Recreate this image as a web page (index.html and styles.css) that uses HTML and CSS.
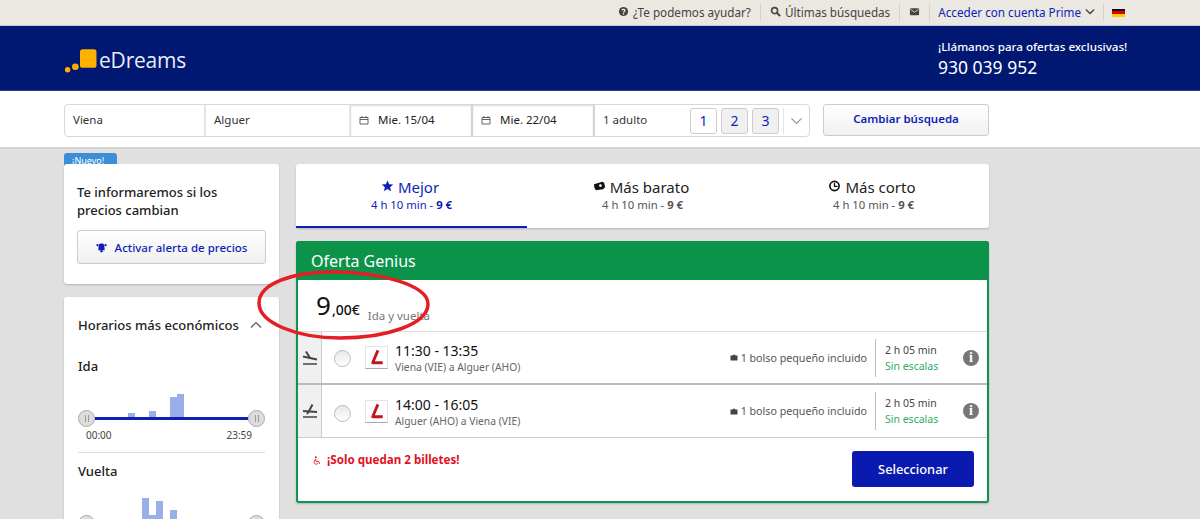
FILE: index.html
```html
<!DOCTYPE html>
<html lang="es">
<head>
    <meta charset="UTF-8">
    <title>eDreams</title>
    <link rel="stylesheet" href="styles.css">
</head>
<body>
    <div class="topbar">
        <div class="top-item">
            <svg class="top-icon" viewBox="0 0 12 12"><circle cx="6" cy="6" r="5" fill="#444"/><path d="M4.4 4.6C4.6 3.2 7.6 3.2 7.6 4.8 7.6 6 6 5.8 6 7.2" fill="none" stroke="#fff" stroke-width="1.3"/><rect x="5.3" y="8" width="1.4" height="1.4" fill="#fff"/></svg>
            ¿Te podemos ayudar?
        </div>
        <div class="top-item">
            <svg class="top-icon" viewBox="0 0 12 12"><circle cx="5" cy="5" r="3.3" fill="none" stroke="#444" stroke-width="1.8"/><path d="M7.5 7.5L11 11" stroke="#444" stroke-width="2.2"/></svg>
            Últimas búsquedas
        </div>
        <div class="top-item">
            <svg class="top-icon" viewBox="0 0 12 12"><rect x="1" y="2.5" width="10" height="7.5" rx="1" fill="#444"/><path d="M1.5 3.5L6 6.8 10.5 3.5" fill="none" stroke="#ebe8e2" stroke-width=".9"/></svg>
        </div>
        <div class="top-item top-prime">
            Acceder con cuenta Prime
            <svg class="top-chevron" viewBox="0 0 12 8"><path d="M1 1.5L6 6.5 11 1.5" fill="none" stroke="#444" stroke-width="1.6"/></svg>
        </div>
        <div class="top-item top-flag">
            <span class="flag"><i class="flag-black"></i><i class="flag-red"></i><i class="flag-gold"></i></span>
        </div>
    </div>

    <header class="header">
        <div class="logo">
            <svg class="logo-mark" viewBox="0 0 32 26"><circle cx="3.5" cy="22" r="2.6" fill="#ffb000"/><circle cx="11" cy="19" r="3.2" fill="#ffb000"/><rect x="15.5" y="2" width="16" height="18" rx="2.5" fill="#ffb000"/></svg>
            <span class="logo-text">eDreams</span>
        </div>
        <div class="phone">
            <div class="phone-label">¡Llámanos para ofertas exclusivas!</div>
            <div class="phone-number">930 039 952</div>
        </div>
    </header>

    <div class="search-strip">
        <div class="search-box">
            <div class="field field-city">Viena</div>
            <div class="field field-city">Alguer</div>
            <div class="field field-date">
                <svg class="cal-icon" viewBox="0 0 10 10"><path d="M1 2.5H9V9H1ZM1 4.5H9M3 1V3M7 1V3" fill="none" stroke="#555" stroke-width=".9"/></svg>
                Mie. 15/04
            </div>
            <div class="field field-date">
                <svg class="cal-icon" viewBox="0 0 10 10"><path d="M1 2.5H9V9H1ZM1 4.5H9M3 1V3M7 1V3" fill="none" stroke="#555" stroke-width=".9"/></svg>
                Mie. 22/04
            </div>
            <div class="field field-pax">
                <span class="pax-label">1 adulto</span>
                <span class="pax-btn pax-active">1</span>
                <span class="pax-btn">2</span>
                <span class="pax-btn">3</span>
                <span class="pax-more">
                    <svg viewBox="0 0 12 8"><path d="M1 1.5L6 6.5 11 1.5" fill="none" stroke="#999" stroke-width="1.1"/></svg>
                </span>
            </div>
        </div>
        <div class="search-btn">Cambiar búsqueda</div>
    </div>

    <div class="content">
        <aside class="sidebar">
            <div class="alert-wrap">
                <div class="new-tag">¡Nuevo!</div>
                <div class="card alert-card">
                    <div class="alert-title">Te informaremos si los precios cambian</div>
                    <div class="alert-btn">
                        <svg class="bell" viewBox="0 0 12 12"><path d="M3 3.5C3 2 4.5 1.5 6 1.5S9 2 9 3.5L9.5 9H2.5Z" fill="#0d1fb5"/><circle cx="1.6" cy="3.5" r="1.2" fill="#0d1fb5"/><circle cx="10.4" cy="3.5" r="1.2" fill="#0d1fb5"/><circle cx="6" cy="10" r="1.3" fill="#0d1fb5"/></svg>
                        Activar alerta de precios
                    </div>
                </div>
            </div>
            <div class="card hours-card">
                <div class="hours-head">
                    Horarios más económicos
                    <svg class="hours-chevron" viewBox="0 0 12 8"><path d="M1 6.5L6 1.5 11 6.5" fill="none" stroke="#555" stroke-width="1.2"/></svg>
                </div>
                <div class="hours-label">Ida</div>
                <div class="hist">
                    <i class="bar" style="margin-left:50px;height:5px"></i>
                    <i class="bar" style="margin-left:14px;height:7px"></i>
                    <i class="bar" style="margin-left:14px;height:21px"></i>
                    <i class="bar" style="height:24px"></i>
                </div>
                <div class="slider">
                    <span class="handle"><i></i></span>
                    <span class="track"></span>
                    <span class="handle"><i></i></span>
                </div>
                <div class="slider-times"><span>00:00</span><span>23:59</span></div>
                <div class="hours-sep"></div>
                <div class="hours-label">Vuelta</div>
                <div class="hist">
                    <i class="bar" style="margin-left:64px;height:25px"></i>
                    <i class="bar" style="height:8px"></i>
                    <i class="bar" style="height:22px"></i>
                    <i class="bar" style="margin-left:7px;height:13px"></i>
                </div>
                <div class="slider">
                    <span class="handle"><i></i></span>
                    <span class="track"></span>
                    <span class="handle"><i></i></span>
                </div>
            </div>
        </aside>

        <main class="results">
            <div class="card tabs">
                <div class="tab tab-active">
                    <div class="tab-title">
                        <svg class="tab-icon" viewBox="0 0 12 12"><path d="M6 .5L7.6 4.3 11.7 4.6 8.6 7.3 9.6 11.3 6 9.1 2.4 11.3 3.4 7.3 .3 4.6 4.4 4.3Z" fill="#0d1fb5"/></svg>
                        Mejor
                    </div>
                    <div class="tab-sub">4 h 10 min - <b>9 €</b></div>
                </div>
                <div class="tab">
                    <div class="tab-title">
                        <svg class="tab-icon" viewBox="0 0 14 12"><path d="M1 4L10 1.5 12 2.5 13 7 11 9.5 3 10.5 1.5 8Z" fill="#111"/><circle cx="8" cy="5.5" r="1.5" fill="#fff"/></svg>
                        Más barato
                    </div>
                    <div class="tab-sub">4 h 10 min - <b>9 €</b></div>
                </div>
                <div class="tab">
                    <div class="tab-title">
                        <svg class="tab-icon" viewBox="0 0 12 12"><circle cx="6" cy="6" r="4.6" fill="none" stroke="#111" stroke-width="1.7"/><path d="M6 3V6.3H9" fill="none" stroke="#111" stroke-width="1.3"/></svg>
                        Más corto
                    </div>
                    <div class="tab-sub">4 h 10 min - <b>9 €</b></div>
                </div>
            </div>

            <div class="offer">
                <div class="offer-head">Oferta Genius</div>
                <div class="offer-price">
                    <span class="price-int">9</span><span class="price-dec">,00€</span>
                    <span class="price-note">Ida y vuelta</span>
                </div>

                <div class="leg leg-first">
                    <div class="leg-side">
                        <svg viewBox="0 0 16 14"><path d="M1 5.5L15 8.5" stroke="#444" stroke-width="2.2"/><path d="M4 .5L8 7" stroke="#444" stroke-width="2"/><path d="M1 13H15" stroke="#444" stroke-width="1.5"/></svg>
                    </div>
                    <span class="radio"></span>
                    <span class="airline"><svg viewBox="0 0 22 22"><path d="M12.5 3.5L7 16.5H17.5" fill="none" stroke="#c3161c" stroke-width="3" stroke-linejoin="round"/></svg></span>
                    <div class="leg-times">
                        <div class="leg-hours">11:30 - 13:35</div>
                        <div class="leg-route">Viena (VIE) a Alguer (AHO)</div>
                    </div>
                    <div class="leg-bag">
                        <svg class="bag-icon" viewBox="0 0 10 9"><path d="M3.5 2V1H6.5V2H9.5V8.5H.5V2Z" fill="#444"/></svg>
                        1 bolso pequeño incluido
                    </div>
                    <div class="leg-info">
                        <div class="leg-duration">2 h 05 min</div>
                        <div class="leg-stops">Sin escalas</div>
                    </div>
                    <span class="info-icon">i</span>
                </div>

                <div class="leg">
                    <div class="leg-side">
                        <svg viewBox="0 0 16 14"><path d="M1 7L15 8" stroke="#444" stroke-width="2"/><path d="M10.5 .5L7 7 5 10" fill="none" stroke="#444" stroke-width="2"/><path d="M1 13H15" stroke="#444" stroke-width="1.5"/></svg>
                    </div>
                    <span class="radio"></span>
                    <span class="airline"><svg viewBox="0 0 22 22"><path d="M12.5 3.5L7 16.5H17.5" fill="none" stroke="#c3161c" stroke-width="3" stroke-linejoin="round"/></svg></span>
                    <div class="leg-times">
                        <div class="leg-hours">14:00 - 16:05</div>
                        <div class="leg-route">Alguer (AHO) a Viena (VIE)</div>
                    </div>
                    <div class="leg-bag">
                        <svg class="bag-icon" viewBox="0 0 10 9"><path d="M3.5 2V1H6.5V2H9.5V8.5H.5V2Z" fill="#444"/></svg>
                        1 bolso pequeño incluido
                    </div>
                    <div class="leg-info">
                        <div class="leg-duration">2 h 05 min</div>
                        <div class="leg-stops">Sin escalas</div>
                    </div>
                    <span class="info-icon">i</span>
                </div>

                <div class="offer-foot">
                    <div class="seats">
                        <svg class="seat-icon" viewBox="0 0 10 12"><circle cx="3.5" cy="1.5" r="1.3" fill="#e3101f"/><path d="M3.5 3.5V7H7L8.5 10.5M3 5A3 3 0 1 0 6.5 9.5" fill="none" stroke="#e3101f" stroke-width="1.2"/></svg>
                        ¡Solo quedan 2 billetes!
                    </div>
                    <div class="select-btn">Seleccionar</div>
                </div>
            </div>
        </main>
    </div>

    <svg class="circle-mark" viewBox="0 0 180 74"><path d="M173 36C173 17 125 4 78 4 36 4 4 16 4 35 4 55 42 70 85 70 132 70 173 56 173 36Z" fill="none" stroke="#e41e26" stroke-width="3.5"/></svg>
</body>
</html>
```

FILE: styles.css
```css
* {
    box-sizing: border-box;
}
html, body {
    height: 100%;
    overflow: hidden;
}
body {
    margin: 0;
    position: relative;
    background: #e0e0e0;
    font-family: 'Noto Sans', sans-serif;
    color: #222;
}

/* top bar */
.topbar {
    height: 26px;
    padding: 4px 67px 0 0;
    background: #ebe8e2;
    border-bottom: 1px solid #c2c6d8;
    display: flex;
    justify-content: flex-end;
    font-size: 11.7px;
    color: #444;
}
.top-item {
    height: 17px;
    padding: 0 9px 2px;
    border-left: 1px solid #d2d0ca;
    display: flex;
    align-items: center;
    gap: 4px;
}
.top-item:first-child {
    border-left: none;
}
.top-icon {
    width: 11px;
    height: 11px;
}
.top-prime {
    padding: 0 8px 2px;
    gap: 3px;
    color: #0d1fb5;
}
.top-flag {
    padding: 0 8px;
}
.top-chevron {
    width: 10px;
    height: 7px;
    margin-left: 1px;
}
.flag {
    width: 13px;
    height: 8px;
    display: flex;
    flex-direction: column;
}
.flag i {
    flex: 1;
}
.flag-black {
    background: #111;
}
.flag-red {
    background: #d00;
}
.flag-gold {
    background: #fc0;
}

/* header */
.header {
    height: 65px;
    padding: 0 62px 0 64px;
    background: #001871;
    border-bottom: 1px solid #2b3f93;
    display: flex;
    justify-content: space-between;
    align-items: flex-start;
    color: #fff;
}
.logo {
    margin-top: 21px;
    display: flex;
    align-items: flex-start;
    gap: 2px;
}
.logo-mark {
    width: 33px;
    height: 27px;
}
.logo-text {
    font-family: 'Open Sans', sans-serif;
    font-size: 21px;
    line-height: 26px;
    letter-spacing: -.2px;
    color: #e8ecf6;
}
.phone {
    width: 200px;
    padding-top: 12px;
}
.phone-label {
    font-size: 11.6px;
    line-height: 17px;
    font-weight: 500;
}
.phone-number {
    font-size: 17.5px;
    line-height: 24px;
}

/* search */
.search-strip {
    height: 58px;
    padding: 13px 0 0 64px;
    background: #fff;
    border-bottom: 2px solid #d4d4d4;
    display: flex;
    gap: 13px;
}
.search-box {
    width: 746px;
    height: 33px;
    border: 1px solid #d8d8d8;
    border-radius: 4px;
    display: flex;
    font-size: 11.5px;
    color: #333;
}
.field {
    padding: 0 0 2px 8px;
    border-right: 2px solid #e4e4e4;
    display: flex;
    align-items: center;
}
.field-city {
    width: 141px;
}
.field-city + .field-city {
    width: 145px;
}
.field-date {
    width: 122px;
    box-shadow: inset 0 1px 2px #ddd;
    border-right: 2px solid #d4d4d4;
    color: #222;
}
.field-pax {
    flex: 1;
    padding-bottom: 0;
    border-right: none;
}
.cal-icon {
    width: 10px;
    height: 10px;
    margin-right: 9px;
}
.pax-label {
    width: 87px;
    padding-bottom: 2px;
}
.pax-btn {
    width: 27px;
    height: 26px;
    margin-right: 4px;
    border: 1px solid #ccc;
    border-radius: 3px;
    background: #f0f0f0;
    color: #0d1fb5;
    font-size: 14px;
    display: flex;
    justify-content: center;
    align-items: center;
}
.pax-active {
    background: #fff;
}
.pax-more {
    width: 26px;
    height: 26px;
    border-left: 1px solid #e4e4e4;
    display: flex;
    justify-content: center;
    align-items: center;
}
.pax-more svg {
    width: 13px;
    height: 8px;
}
.search-btn {
    width: 166px;
    height: 32px;
    padding-bottom: 3px;
    border: 1px solid #ccc;
    border-radius: 3px;
    background: linear-gradient(#fff, #f0f0f0);
    color: #0d1fb5;
    font-size: 11.5px;
    font-weight: 600;
    display: flex;
    justify-content: center;
    align-items: center;
}

/* page */
.content {
    padding: 15px 0 0 64px;
    display: flex;
    gap: 17px;
    align-items: flex-start;
}
.card {
    background: #fff;
    border-radius: 3px;
    box-shadow: 0 1px 2px rgba(0, 0, 0, 0.2);
}
.sidebar {
    width: 215px;
}
.alert-wrap {
    margin-top: -11px;
}
.new-tag {
    width: 53px;
    height: 20px;
    margin-bottom: -9px;
    padding: 2px 0 0 8px;
    border-radius: 3px 3px 0 0;
    background: #3a8fd6;
    color: #fff;
    font-size: 9px;
    line-height: 12px;
}
.alert-card {
    position: relative;
    height: 120px;
    padding: 19px 13px 0;
}
.alert-title {
    max-width: 170px;
    font-size: 13px;
    line-height: 18px;
    font-weight: 500;
    color: #222;
}
.alert-btn {
    height: 34px;
    margin-top: 11px;
    border: 1px solid #ccc;
    border-radius: 3px;
    background: linear-gradient(#fff, #f0f0f0);
    color: #0d1fb5;
    font-size: 11.5px;
    font-weight: 500;
    display: flex;
    justify-content: center;
    align-items: center;
    gap: 8px;
}
.bell {
    width: 11px;
    height: 11px;
}
.hours-card {
    margin-top: 13px;
    height: 300px;
    padding: 19px 14px 0;
}
.hours-head {
    font-size: 13px;
    line-height: 18px;
    font-weight: 500;
    display: flex;
    justify-content: space-between;
    align-items: center;
    padding-right: 3px;
}
.hours-chevron {
    width: 12px;
    height: 8px;
}
.hours-label {
    margin-top: 23px;
    font-size: 13px;
    line-height: 18px;
    font-weight: 500;
}
.hist {
    height: 42px;
    margin-top: 1px;
    display: flex;
    align-items: flex-end;
}
.bar {
    width: 7px;
    display: block;
    background: #9aaeea;
}
.slider {
    margin-top: -8px;
    height: 16px;
    display: flex;
    align-items: center;
}
.handle {
    width: 17px;
    height: 17px;
    flex: none;
    border: 1px solid #aaa;
    border-radius: 50%;
    background: #ddd;
    display: flex;
    justify-content: center;
    align-items: center;
}
.handle i {
    width: 4px;
    height: 7px;
    border-left: 1px solid #999;
    border-right: 1px solid #999;
}
.track {
    flex: 1;
    height: 3px;
    background: #0d1fb5;
}
.slider-times {
    padding: 3px 13px 0 8px;
    display: flex;
    justify-content: space-between;
    font-size: 10px;
    line-height: 12px;
    color: #444;
}
.hours-sep {
    margin-top: 11px;
    height: 1px;
    background: #ddd;
}
.hours-sep + .hours-label {
    margin-top: 9px;
}

/* results */
.results {
    width: 693px;
}
.tabs {
    height: 64px;
    display: flex;
}
.tab {
    flex: 1;
    height: 64px;
    padding-top: 14px;
    text-align: center;
}
.tab-active {
    border-bottom: 2px solid #0d1fb5;
    color: #0d1fb5;
}
.tab-title {
    padding-right: 3px;
    font-size: 15px;
    line-height: 19px;
    display: flex;
    justify-content: center;
    align-items: center;
    gap: 4px;
}
.tab-icon {
    width: 13px;
    height: 12px;
    margin-top: -3px;
}
.tab-sub {
    font-size: 11.3px;
    line-height: 16px;
    color: #555;
}
.tab-active .tab-sub {
    color: #0d1fb5;
}
.offer {
    height: 262px;
    margin-top: 13px;
    border: 2px solid #0e9450;
    border-top: none;
    border-radius: 3px;
    background: #fff;
    box-shadow: 0 1px 2px rgba(0, 0, 0, 0.2);
}
.offer-head {
    height: 39px;
    margin: 0 -2px;
    padding-left: 15px;
    border-radius: 3px 3px 0 0;
    background: #0b934a;
    color: #fff;
    font-size: 16px;
    line-height: 40px;
}
.offer-price {
    height: 51px;
    padding: 7px 0 0 18px;
    display: flex;
    align-items: baseline;
    white-space: nowrap;
}
.price-int {
    font-size: 26px;
    line-height: 36px;
    color: #111;
}
.price-dec {
    margin-left: 1px;
    font-size: 14px;
    font-weight: 500;
    color: #111;
}
.price-note {
    align-self: flex-start;
    margin: 21px 0 0 8px;
    font-size: 11.5px;
    line-height: 16px;
    color: #777;
}
.leg {
    height: 53px;
    border-bottom: 1px solid #ccc;
    display: flex;
    align-items: center;
}
.leg-first {
    height: 54px;
    border-top: 1px solid #ddd;
    border-bottom: 2px solid #bbb;
}
.leg-side {
    width: 24px;
    height: 100%;
    flex: none;
    background: #f0f0f0;
    border-right: 1px solid #ccc;
    display: flex;
    justify-content: center;
    align-items: center;
}
.leg-side svg {
    width: 16px;
    height: 14px;
}
.radio {
    width: 17px;
    height: 17px;
    flex: none;
    margin: 4px 0 0 12px;
    border: 1px solid #bbb;
    border-radius: 50%;
    background: linear-gradient(#e8e8e8, #fff);
}
.leg-first .radio {
    margin-top: 2px;
}
.airline {
    width: 23px;
    height: 23px;
    flex: none;
    margin-left: 14px;
    border: 1px solid #e4e4e4;
    border-bottom: 1px solid #aaa;
    display: block;
}
.airline svg {
    width: 21px;
    height: 21px;
    display: block;
}
.leg-times {
    margin: 2px 0 0 7px;
    flex: 1;
}
.leg-first .leg-times {
    margin-top: 0;
}
.leg-hours {
    font-size: 14px;
    line-height: 17px;
    color: #111;
}
.leg-route {
    margin-top: 2px;
    font-size: 10.3px;
    line-height: 13px;
    color: #666;
}
.leg-bag {
    display: flex;
    align-items: center;
    gap: 3px;
    margin-right: 8px;
    font-size: 10.7px;
    color: #555;
}
.bag-icon {
    width: 8px;
    height: 7px;
}
.leg-info {
    width: 88px;
    height: 38px;
    padding: 3px 0 0 9px;
    border-left: 1px solid #bbb;
    font-size: 10.5px;
    line-height: 16px;
}
.leg-duration {
    color: #444;
}
.leg-stops {
    color: #2dab66;
}
.info-icon {
    width: 16px;
    height: 16px;
    margin-right: 8px;
    flex: none;
    border-radius: 50%;
    background: #777;
    color: #fff;
    font-family: 'Liberation Serif', serif;
    font-size: 14px;
    font-weight: bold;
    line-height: 16px;
    text-align: center;
}
.offer-foot {
    padding: 13px 13px 0 15px;
    display: flex;
    justify-content: space-between;
    align-items: flex-start;
}
.seats {
    display: flex;
    align-items: center;
    gap: 6px;
    font-size: 11.6px;
    line-height: 18px;
    font-weight: 700;
    color: #e3101f;
}
.seat-icon {
    width: 8px;
    height: 9px;
}
.select-btn {
    width: 122px;
    height: 36px;
    border-radius: 3px;
    background: #0a1ab0;
    color: #fff;
    font-size: 12.8px;
    font-weight: 500;
    display: flex;
    justify-content: center;
    align-items: center;
}

/* hand-drawn mark on top of the screenshot */
.circle-mark {
    position: absolute;
    left: 255px;
    top: 268px;
    width: 180px;
    height: 74px;
}
```
